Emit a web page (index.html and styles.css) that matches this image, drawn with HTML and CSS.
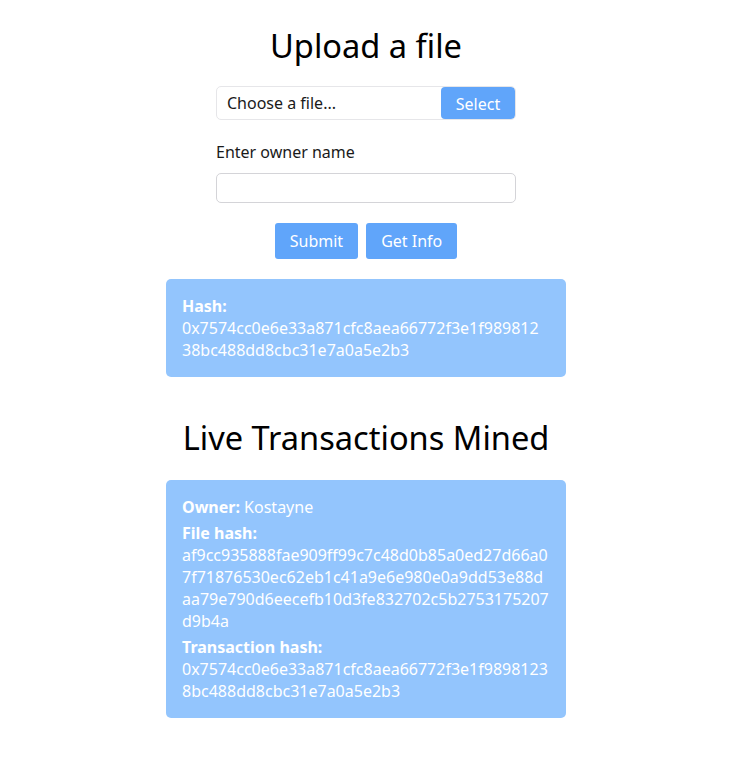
FILE: index.html
```html
<!DOCTYPE html>
<html lang="en">
<head>
<meta charset="utf-8">
<title>Upload a file</title>
<link rel="stylesheet" href="styles.css">
</head>
<body>
<main class="page">
  <h1 class="title">Upload a file</h1>
  <div class="upload">
    <div class="file">
      <span class="file-name">Choose a file...</span>
      <span class="file-btn">Select</span>
    </div>
    <label class="label" for="owner">Enter owner name</label>
    <input class="input" id="owner" type="text">
  </div>
  <div class="actions">
    <button class="btn">Submit</button>
    <button class="btn">Get Info</button>
  </div>
  <div class="card card-hash">
    <div class="field"><b>Hash:</b><br>0x7574cc0e6e33a871cfc8aea66772f3e1f98981238bc488dd8cbc31e7a0a5e2b3</div>
  </div>
  <h2 class="title title-live">Live Transactions Mined</h2>
  <div class="card">
    <div class="field"><b>Owner:</b> Kostayne</div>
    <div class="field"><b>File hash:</b><br>af9cc935888fae909ff99c7c48d0b85a0ed27d66a07f71876530ec62eb1c41a9e6e980e0a9dd53e88daa79e790d6eecefb10d3fe832702c5b2753175207d9b4a</div>
    <div class="field"><b>Transaction hash:</b><br>0x7574cc0e6e33a871cfc8aea66772f3e1f98981238bc488dd8cbc31e7a0a5e2b3</div>
  </div>
</main>
</body>
</html>
```

FILE: styles.css
```css
* { box-sizing: border-box; }
body {
  margin: 0;
  background: #fff;
  font-family: "Noto Sans", "Open Sans", sans-serif;
  font-size: 16px;
  color: #1a1a1a;
}
.page {
  display: flex;
  flex-direction: column;
  align-items: center;
  padding: 24px 0 40px 3px;
}
.title {
  margin: 0;
  font-size: 32.6px;
  font-weight: 400;
  line-height: 44px;
  color: #000;
}
.upload {
  width: 300px;
  margin-top: 18px;
  display: flex;
  flex-direction: column;
}
.file {
  display: flex;
  height: 34px;
  border: 1px solid #e6e6e9;
  border-radius: 5px;
  overflow: hidden;
}
.file-name {
  flex: 1;
  padding-left: 10px;
  line-height: 32px;
  color: #1a1a1a;
}
.file-btn {
  width: 74px;
  background: #60a5fa;
  color: #fff;
  text-align: center;
  line-height: 34px;
  border-radius: 4px;
}
.label {
  margin-top: 21px;
  line-height: 22px;
  color: #1a1a1a;
}
.input {
  margin-top: 10px;
  height: 30px;
  border: 1px solid #d4d4d8;
  border-radius: 5px;
  font: inherit;
  padding: 0 8px;
}
.actions {
  display: flex;
  gap: 8px;
  margin-top: 20px;
}
.btn {
  height: 36px;
  padding: 0 15px;
  border: none;
  border-radius: 3px;
  background: #60a5fa;
  color: #fff;
  font: inherit;
  font-size: 16px;
}
.card {
  width: 400px;
  margin-top: 20px;
  padding: 16px;
  background: #93c5fd;
  border-radius: 5px;
  color: #fff;
  line-height: 22px;
  word-break: break-all;
  display: flex;
  flex-direction: column;
  gap: 4px;
}
.card-hash { padding-right: 24px; }
.card b { font-weight: 700; }
.title-live { margin-top: 39px; }
```
